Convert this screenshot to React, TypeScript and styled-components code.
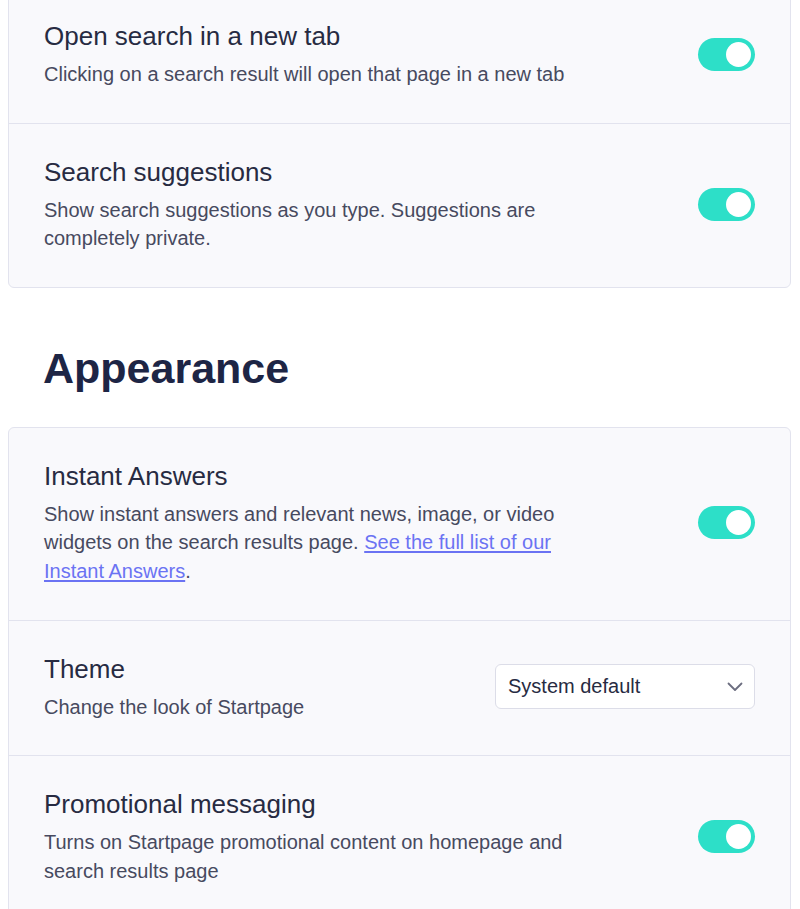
import React from "react";
import styled, { createGlobalStyle } from "styled-components";

const GlobalStyle = createGlobalStyle`
  html, body { margin: 0; padding: 0; background: #ffffff; }
  body { font-family: "Liberation Sans", Arial, Helvetica, sans-serif; }
`;

const Page = styled.div`
  padding: 0 9px 0 8px;
  overflow: hidden;
`;

const Card = styled.section<{ $clipTop?: boolean }>`
  background: #f9f9fc;
  border: 1px solid #e2e3ee;
  border-radius: 6px;
  margin-top: ${(p) => (p.$clipTop ? "-13px" : "0")};
  overflow: hidden;
`;

const Row = styled.div`
  display: flex;
  align-items: center;
  justify-content: space-between;
  gap: 24px;
  padding: 32px 35px 34px 35px;
  & + & {
    border-top: 1px solid #e2e3ee;
  }
`;

const TextCol = styled.div`
  max-width: 560px;
`;

const Title = styled.div`
  font-size: 26px;
  line-height: 32px;
  color: #272b42;
`;

const Desc = styled.div`
  margin-top: 8px;
  font-size: 20px;
  line-height: 28.6px;
  color: #474a5f;
`;

const Link = styled.a`
  color: #6b73f3;
  text-decoration: underline;
  text-underline-offset: 2px;
`;

const SectionHeading = styled.h2`
  margin: 0;
  padding: 55px 0 34px 35px;
  font-size: 43px;
  line-height: 50px;
  font-weight: 700;
  color: #1d2545;
`;

const Toggle = styled.span<{ $on: boolean }>`
  flex: none;
  position: relative;
  display: inline-block;
  width: 57px;
  height: 33px;
  border-radius: 17px;
  background: ${(p) => (p.$on ? "#2ddfc8" : "#c9cbd8")};
  &::after {
    content: "";
    position: absolute;
    top: 4px;
    left: ${(p) => (p.$on ? "28px" : "4px")};
    width: 25px;
    height: 25px;
    border-radius: 50%;
    background: #ffffff;
  }
`;

const Select = styled.div`
  flex: none;
  box-sizing: border-box;
  width: 260px;
  height: 45px;
  display: flex;
  align-items: center;
  justify-content: space-between;
  padding: 0 11px 0 12px;
  background: #ffffff;
  border: 1px solid #dcdde8;
  border-radius: 6px;
  font-size: 20px;
  color: #272b42;
`;

const Chevron = () => (
  <svg width="16" height="10" viewBox="0 0 16 10" fill="none">
    <path d="M1.5 1.5L8 8L14.5 1.5" stroke="#6c6e80" strokeWidth="1.8" strokeLinecap="round" strokeLinejoin="round" />
  </svg>
);

export default function App() {
  return (
    <>
      <GlobalStyle />
      <Page>
        <Card $clipTop>
          <Row>
            <TextCol>
              <Title>Open search in a new tab</Title>
              <Desc>Clicking on a search result will open that page in a new tab</Desc>
            </TextCol>
            <Toggle $on />
          </Row>
          <Row>
            <TextCol>
              <Title>Search suggestions</Title>
              <Desc>Show search suggestions as you type. Suggestions are completely private.</Desc>
            </TextCol>
            <Toggle $on />
          </Row>
        </Card>

        <SectionHeading>Appearance</SectionHeading>

        <Card>
          <Row>
            <TextCol>
              <Title>Instant Answers</Title>
              <Desc>
                Show instant answers and relevant news, image, or video widgets on the search results page.{" "}
                <Link href="#">See the full list of our Instant Answers</Link>.
              </Desc>
            </TextCol>
            <Toggle $on />
          </Row>
          <Row>
            <TextCol>
              <Title>Theme</Title>
              <Desc>Change the look of Startpage</Desc>
            </TextCol>
            <Select>
              <span>System default</span>
              <Chevron />
            </Select>
          </Row>
          <Row>
            <TextCol>
              <Title>Promotional messaging</Title>
              <Desc>Turns on Startpage promotional content on homepage and search results page</Desc>
            </TextCol>
            <Toggle $on />
          </Row>
        </Card>
      </Page>
    </>
  );
}
